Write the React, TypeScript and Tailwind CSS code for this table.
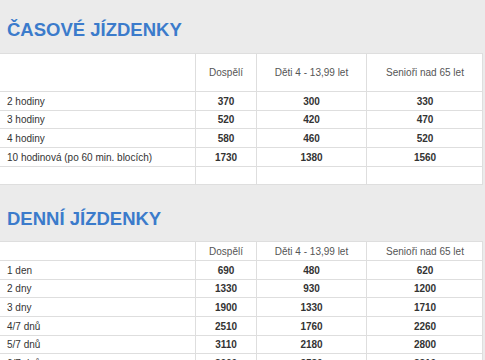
import React from "react";

type Row = [string, string, string, string];

const casove: Row[] = [
  ["2 hodiny", "370", "300", "330"],
  ["3 hodiny", "520", "420", "470"],
  ["4 hodiny", "580", "460", "520"],
  ["10 hodinová (po 60 min. blocích)", "1730", "1380", "1560"],
  ["", "", "", ""],
];

const denni: Row[] = [
  ["1 den", "690", "480", "620"],
  ["2 dny", "1330", "930", "1200"],
  ["3 dny", "1900", "1330", "1710"],
  ["4/7 dnů", "2510", "1760", "2260"],
  ["5/7 dnů", "3110", "2180", "2800"],
  ["6/7 dnů", "3660", "2580", "3310"],
];

const heights = ["h-[19px]", "h-[18px]", "h-[19px]", "h-[19px]", "h-[18px]", "h-[19px]"];

function Table({ rows, headerH }: { rows: Row[]; headerH: string }) {
  return (
    <div className="w-[483px] bg-white border-t border-r border-[#dedede]">
      <div className={`grid grid-cols-[195px_61px_110px_117px] ${headerH} border-b border-[#dedede] text-[10px] text-[#555]`}>
        <div />
        <div className="border-l border-[#dedede] flex items-center justify-center">Dospělí</div>
        <div className="border-l border-[#dedede] flex items-center justify-center">Děti 4 - 13,99 let</div>
        <div className="border-l border-[#dedede] flex items-center justify-center">Senioři nad 65 let</div>
      </div>
      {rows.map((r, i) => (
        <div
          key={i}
          className={`grid grid-cols-[195px_61px_110px_117px] ${heights[i]} border-b border-[#dedede] text-[10px] text-[#333]`}
        >
          <div className="flex items-center pl-[7px]">{r[0]}</div>
          <div className="border-l border-[#dedede] flex items-center justify-center font-bold">{r[1]}</div>
          <div className="border-l border-[#dedede] flex items-center justify-center font-bold">{r[2]}</div>
          <div className="border-l border-[#dedede] flex items-center justify-center font-bold">{r[3]}</div>
        </div>
      ))}
    </div>
  );
}

export default function App() {
  return (
    <div
      className="w-[485px] h-[360px] overflow-hidden bg-[#ebebeb]"
      style={{ fontFamily: '"Liberation Sans", Arial, sans-serif' }}
    >
      <div className="h-[53px] pt-[19px] pl-[7px]">
        <h1 className="text-[18.5px] leading-[22px] font-bold text-[#3b7bcb]">ČASOVÉ JÍZDENKY</h1>
      </div>
      <Table rows={casove} headerH="h-[38px]" />
      <div className="h-[56px] pt-[23px] pl-[7px]">
        <h1 className="text-[18.5px] leading-[22px] font-bold text-[#3b7bcb]">DENNÍ JÍZDENKY</h1>
      </div>
      <Table rows={denni} headerH="h-[19px]" />
    </div>
  );
}
